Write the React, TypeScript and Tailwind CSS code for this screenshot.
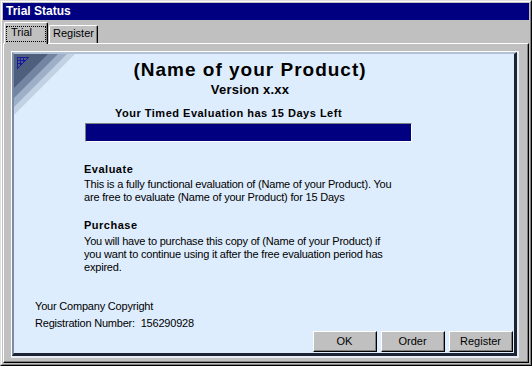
import React from "react";

const font = "font-['Liberation_Sans',Arial,sans-serif]";

const Btn = ({ label }: { label: string }) => (
  <button className="w-[64px] h-[21px] border border-t-white border-l-white border-r-black border-b-black bg-[#c0c0c0] p-0">
    <span className="flex h-full items-center justify-center border-r border-b border-r-[#808080] border-b-[#808080] text-[11px] text-black">
      {label}
    </span>
  </button>
);

const CornerMark = () => (
  <svg className="absolute left-0 top-0" width="64" height="64" viewBox="0 0 64 64">
    <polygon points="0,0 61,0 0,61" fill="#c3d1e4" />
    <polygon points="0,0 53,0 0,53" fill="#9eafc8" />
    <polygon points="0,0 44,0 0,44" fill="#7485a3" />
    <polygon points="0,0 34,0 0,34" fill="#4e5e7d" />
    <g stroke="#1a1aa0" strokeWidth="1" fill="none" shapeRendering="crispEdges">
      <polygon points="3.5,3.5 14.5,3.5 3.5,14.5" />
      <line x1="3.5" y1="6.5" x2="11.5" y2="6.5" />
      <line x1="3.5" y1="9.5" x2="8.5" y2="9.5" />
      <line x1="6.5" y1="3.5" x2="6.5" y2="11.5" />
      <line x1="9.5" y1="3.5" x2="9.5" y2="8.5" />
    </g>
  </svg>
);

export default function App() {
  return (
    <div className={`w-[532px] h-[366px] bg-[#c0c0c0] ${font} text-black`}>
      <div className="h-full border border-t-[#dfdfdf] border-l-[#dfdfdf] border-r-black border-b-black">
        <div className="h-full flex flex-col p-[1px] border border-t-white border-l-white border-r-[#808080] border-b-[#808080]">
          {/* title bar */}
          <div className="h-[17px] bg-[#000080] pl-[3px] text-[12px] font-bold leading-[17px] text-white">
            Trial Status
          </div>

          {/* tabs */}
          <div className="flex h-[23px] items-end pl-[1px]">
            <div className="relative z-10 mb-[-1px] h-[22px] w-[44px] rounded-tl-[2px] rounded-tr-[2px] border-t border-l border-r border-t-white border-l-white border-r-black bg-[#c0c0c0]">
              <div className="h-full border-r border-r-[#808080] pl-[1px] pt-[3px]">
                <div className="h-[16px] w-[40px] border border-dotted border-black pl-[4px] text-[11px] leading-[11px]">
                  Trial
                </div>
              </div>
            </div>
            <div className="ml-[1px] h-[18px] w-[49px] rounded-tl-[2px] rounded-tr-[2px] border-t border-l border-r border-t-white border-l-white border-r-black">
              <div className="h-full border-r border-r-[#808080] pl-[3px] pt-[1px] text-[11px] leading-[13px]">
                Register
              </div>
            </div>
          </div>

          {/* tab page */}
          <div className="flex-1 flex flex-col border border-t-white border-l-white border-r-black border-b-black">
            <div className="flex-1 flex flex-col border-r border-b border-r-[#808080] border-b-[#808080] pt-[7px] pl-[7px] pr-[8px] pb-[3px]">
              <div className="flex-1 flex flex-col border-t border-l border-r-[2px] border-b-[2px] border-t-white border-l-white border-r-[#e6edf6] border-b-[#e6edf6]">
                <div className="flex-1 flex flex-col border-t-[2px] border-l-[2px] border-r-[3px] border-b-[3px] border-t-[#b3c1d5] border-l-[#7d8ca6] border-r-[#1c2434] border-b-[#1c2434]">
                  <div className="relative flex-1 flex flex-col bg-[#deedfd] pb-[1px]">
                    <CornerMark />

                    <div className="relative w-[402px] pl-[70px] pt-[5px]">
                      <div className="text-center text-[19px] font-bold tracking-[1px] leading-[22px]">
                        (Name of your Product)
                      </div>
                      <div className="mt-[1px] text-center text-[13px] font-bold tracking-[0.2px] leading-[16px]">
                        Version x.xx
                      </div>
                      <div className="ml-[31px] mt-[8px] whitespace-nowrap text-[11px] font-bold tracking-[0.5px] leading-[14px]">
                        Your Timed Evaluation has 15 Days Left
                      </div>
                      <div className="ml-[1px] mt-[3px] h-[19px] w-[327px] border border-t-[#808080] border-l-[#808080] border-r-white border-b-white bg-[#000080]" />

                      <div className="mt-[20px] text-[11px] font-bold tracking-[0.5px] leading-[14px]">Evaluate</div>
                      <div className="mt-[2px] whitespace-nowrap text-[11px] tracking-[-0.2px] leading-[13px]">
                        This is a fully functional evaluation of (Name of your Product). You
                        <br />
                        are free to evaluate (Name of your Product) for 15 Days
                      </div>

                      <div className="mt-[14px] text-[11px] font-bold tracking-[0.5px] leading-[14px]">Purchase</div>
                      <div className="mt-[3px] whitespace-nowrap text-[11px] tracking-[-0.2px] leading-[13px]">
                        You will have to purchase this copy of (Name of your Product) if
                        <br />
                        you want to continue using it after the free evaluation period has
                        <br />
                        expired.
                      </div>
                    </div>

                    <div className="mt-auto flex flex-col">
                      <div className="pl-[21px] text-[11px] tracking-[-0.2px] leading-[17px]">
                        <div>Your Company Copyright</div>
                        <div className="whitespace-pre">Registration Number:  156290928</div>
                      </div>
                      <div className="mt-[-1px] flex justify-end gap-[4px] pr-[1px]">
                        <Btn label="OK" />
                        <Btn label="Order" />
                        <Btn label="Register" />
                      </div>
                    </div>
                  </div>
                </div>
              </div>
            </div>
          </div>
        </div>
      </div>
    </div>
  );
}
